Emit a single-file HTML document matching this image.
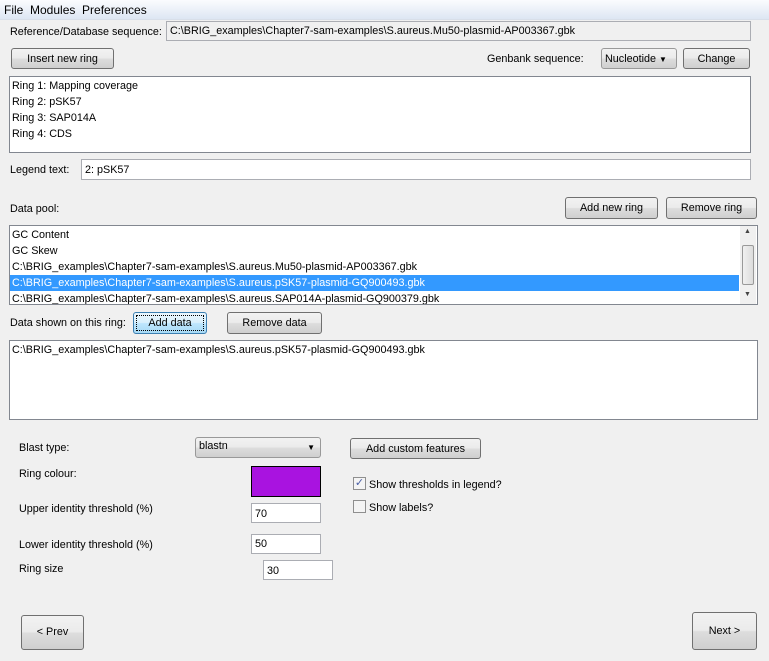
<!DOCTYPE html>
<html><head><style>
body{margin:0;width:769px;height:661px;background:#f0f0f0;font-family:"Liberation Sans",sans-serif;font-size:10.8px;color:#000;position:relative;overflow:hidden}
.a{position:absolute;white-space:nowrap}
.menu{left:0;top:0;width:769px;height:19px;background:linear-gradient(#fbfcfe,#dde6f3);border-bottom:1px solid #d8dfe9}
.btn{position:absolute;border:1px solid #707070;border-radius:3px;background:linear-gradient(#f2f2f2 0%,#ebebeb 48%,#dddddd 52%,#cfcfcf 100%);text-align:center;box-sizing:border-box;font-size:10.8px}
.fld{position:absolute;background:#fff;border:1px solid #abadb3;box-sizing:border-box;padding-left:3px}
.list div{height:16px;line-height:16px;padding-left:2px}
</style></head><body>
<div class="a menu"></div>
<div class="a" style="left:4px;top:3px;font-size:12px">File&nbsp; Modules&nbsp; Preferences</div>

<div class="a" style="left:10px;top:26px">Reference/Database sequence:</div>
<div class="fld" style="left:166px;top:21px;width:585px;height:20px;background:#f0f0f0;line-height:19px">C:\BRIG_examples\Chapter7-sam-examples\S.aureus.Mu50-plasmid-AP003367.gbk</div>

<div class="btn" style="left:11px;top:48px;width:103px;height:21px;line-height:20px">Insert new ring</div>
<div class="a" style="left:487px;top:53px">Genbank sequence:</div>
<div class="btn" style="left:601px;top:48px;width:76px;height:21px;line-height:20px;text-align:left;padding-left:3px;border-color:#999">Nucleotide <span style="font-size:8px">&#9660;</span></div>
<div class="btn" style="left:683px;top:48px;width:67px;height:21px;line-height:20px">Change</div>

<div class="fld list" style="left:9px;top:76px;width:742px;height:77px;border-color:#828790;padding:1px 0 0 0">
<div>Ring 1: Mapping coverage</div><div>Ring 2: pSK57</div><div>Ring 3: SAP014A</div><div>Ring 4: CDS</div></div>

<div class="a" style="left:10px;top:164px">Legend text:</div>
<div class="fld" style="left:81px;top:159px;width:670px;height:21px;line-height:20px">2: pSK57</div>

<div class="a" style="left:10px;top:203px">Data pool:</div>
<div class="btn" style="left:565px;top:197px;width:93px;height:22px;line-height:21px">Add new ring</div>
<div class="btn" style="left:666px;top:197px;width:91px;height:22px;line-height:21px">Remove ring</div>

<div class="fld list" style="left:9px;top:225px;width:749px;height:80px;border-color:#828790;padding:1px 0 0 0;overflow:hidden">
<div>GC Content</div><div>GC Skew</div><div>C:\BRIG_examples\Chapter7-sam-examples\S.aureus.Mu50-plasmid-AP003367.gbk</div>
<div style="background:#3399ff;color:#fff;width:727px">C:\BRIG_examples\Chapter7-sam-examples\S.aureus.pSK57-plasmid-GQ900493.gbk</div>
<div>C:\BRIG_examples\Chapter7-sam-examples\S.aureus.SAP014A-plasmid-GQ900379.gbk</div></div>
<div class="a" style="left:740px;top:226px;width:16px;height:78px;background:#f0f0f0"></div>
<div class="a" style="left:744px;top:228px;font-size:7px;color:#444">&#9650;</div>
<div class="a" style="left:742px;top:245px;width:12px;height:40px;border:1px solid #999;border-radius:2px;background:linear-gradient(90deg,#f0f0f0,#dcdcdc);box-sizing:border-box"></div>
<div class="a" style="left:744px;top:291px;font-size:7px;color:#444">&#9660;</div>

<div class="a" style="left:10px;top:317px">Data shown on this ring:</div>
<div class="btn" style="left:133px;top:312px;width:74px;height:22px;line-height:21px;border-color:#3c7fb1;outline:1px dotted #000;outline-offset:-4px;background:linear-gradient(#eaf6fd,#d9f0fc 48%,#bee6fd 52%,#a7d9f5)">Add data</div>
<div class="btn" style="left:227px;top:312px;width:95px;height:22px;line-height:21px">Remove data</div>

<div class="fld list" style="left:9px;top:340px;width:749px;height:80px;border-color:#828790;padding:1px 0 0 0">
<div>C:\BRIG_examples\Chapter7-sam-examples\S.aureus.pSK57-plasmid-GQ900493.gbk</div></div>

<div class="a" style="left:19px;top:442px">Blast type:</div>
<div class="btn" style="left:195px;top:437px;width:126px;height:21px;line-height:17px;text-align:left;padding-left:3px;border-color:#999">blastn<span style="position:absolute;right:5px;top:1px;font-size:8px">&#9660;</span></div>
<div class="btn" style="left:350px;top:438px;width:131px;height:21px;line-height:20px">Add custom features</div>

<div class="a" style="left:19px;top:468px">Ring colour:</div>
<div class="a" style="left:251px;top:466px;width:70px;height:31px;background:#a913e0;border:1px solid #000;box-sizing:border-box"></div>

<div class="a" style="left:353px;top:477px;width:13px;height:13px;border:1px solid #8f8f8f;background:#f4f4f4;box-sizing:border-box;font-size:11px;line-height:11px;text-align:center;color:#4a5fa5">&#10003;</div>
<div class="a" style="left:369px;top:479px">Show thresholds in legend?</div>
<div class="a" style="left:353px;top:500px;width:13px;height:13px;border:1px solid #8f8f8f;background:#f4f4f4;box-sizing:border-box"></div>
<div class="a" style="left:369px;top:502px">Show labels?</div>

<div class="a" style="left:19px;top:503px">Upper identity threshold (%)</div>
<div class="fld" style="left:251px;top:503px;width:70px;height:20px;line-height:20px">70</div>
<div class="a" style="left:19px;top:539px">Lower identity threshold (%)</div>
<div class="fld" style="left:251px;top:534px;width:70px;height:20px;line-height:18px">50</div>
<div class="a" style="left:19px;top:563px">Ring size</div>
<div class="fld" style="left:263px;top:560px;width:70px;height:20px;line-height:20px">30</div>

<div class="btn" style="left:21px;top:615px;width:63px;height:35px;line-height:33px">&lt; Prev</div>
<div class="btn" style="left:692px;top:612px;width:65px;height:38px;line-height:36px">Next &gt;</div>
</body></html>
